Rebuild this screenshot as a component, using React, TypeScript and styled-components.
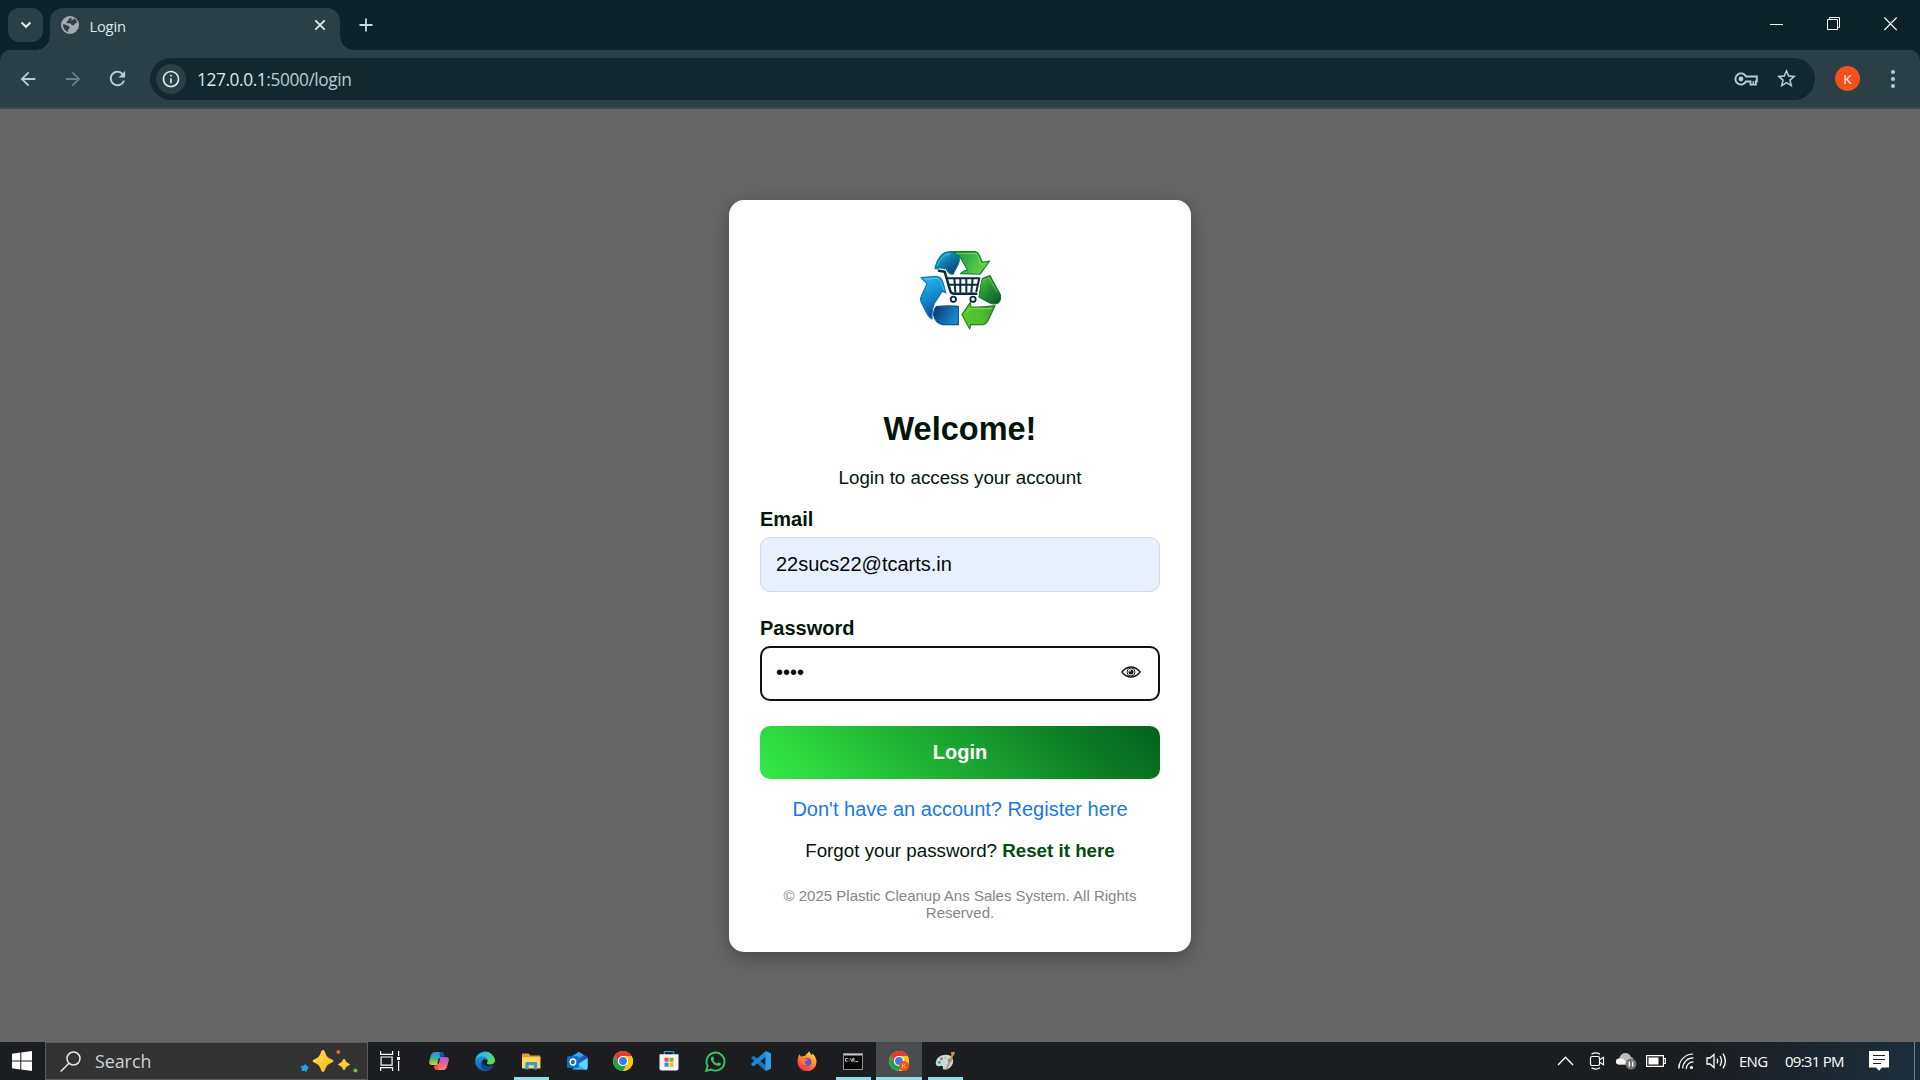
import React from "react";
import styled, { createGlobalStyle, css } from "styled-components";
import { MdArrowBack, MdArrowForward, MdRefresh, MdInfoOutline, MdStarBorder } from "react-icons/md";

const Global = createGlobalStyle`
  * { box-sizing: border-box; }
  body { margin: 0; overflow: hidden; background: #666; }
  svg { display: block; flex: none; }
`;

const uiFont = `"Open Sans", "Noto Sans", sans-serif`;
const pageFont = `"Liberation Sans", Arial, sans-serif`;

const Screen = styled.div`
  width: 1920px;
  height: 1080px;
  display: flex;
  flex-direction: column;
  background: #666;
`;

/* ---------- browser chrome ---------- */
const TabStrip = styled.header`
  height: 50px;
  flex: none;
  display: flex;
  align-items: flex-start;
  padding: 8px 1px 0 8px;
  background: #0c2329;
  color: #dfe9ec;
`;
const TabSearch = styled.button`
  width: 35px;
  height: 34px;
  border: 0;
  border-radius: 11px;
  background: #2a3f46;
  color: #dfe9ec;
  display: grid;
  place-items: center;
  padding: 0;
  margin-right: 7px;
`;
const Tab = styled.div`
  position: relative;
  width: 290px;
  height: 42px;
  border-radius: 13px 13px 0 0;
  background: #2a3f46;
  display: flex;
  align-items: center;
  padding: 0 13px 8px 11px;
  font: 14.7px/20px ${uiFont};
  &::before, &::after {
    content: "";
    position: absolute;
    bottom: 0;
    width: 14px;
    height: 14px;
  }
  &::before { left: -14px; background: radial-gradient(circle at 0 0, transparent 13.5px, #2a3f46 14px); }
  &::after { right: -14px; background: radial-gradient(circle at 100% 0, transparent 13.5px, #2a3f46 14px); }
`;
const TabTitle = styled.span`
  flex: 1;
  margin-left: 10.5px;
  padding-top: 1px;
  letter-spacing: -0.2px;
`;
const NewTab = styled.div`
  margin: 10px 0 0 19px;
`;
const WindowButtons = styled.div`
  margin-left: auto;
  display: flex;
  color: #fff;
`;
const WindowButton = styled.div`
  width: 57px;
  height: 32px;
  display: grid;
  place-items: center;
`;
const ToolbarBack = styled.div`
  background: #0c2329;
  flex: none;
`;
const Toolbar = styled.nav`
  height: 59px;
  border-radius: 10px 10px 0 0;
  border-bottom: 2px solid #3c4e54;
  background: #2a3f46;
  display: flex;
  align-items: center;
  padding-left: 5px;
  color: #b9cdd3;
`;
const NavButton = styled.div<{ $dim?: boolean }>`
  width: 45px;
  height: 34px;
  display: grid;
  place-items: center;
  color: ${(p) => (p.$dim ? "#6c7f86" : "#b9cdd3")};
`;
const AddressBar = styled.div`
  width: 1665px;
  height: 42px;
  margin-left: 10px;
  border-radius: 21px;
  background: #13282e;
  display: flex;
  align-items: center;
  padding: 0 17px 0 6px;
`;
const SiteInfo = styled.div`
  width: 30px;
  height: 30px;
  border-radius: 50%;
  background: #2a3f46;
  display: grid;
  place-items: center;
  color: #dce8eb;
`;
const Url = styled.span`
  flex: 1;
  margin-left: 11px;
  padding-top: 2px;
  font: 17.3px/24px ${uiFont};
  letter-spacing: -0.4px;
  color: #dde6e9;
`;
const UrlPath = styled.span`
  color: #bccbd0;
`;
const StarButton = styled.div`
  margin-left: 17px;
`;
const Avatar = styled.div`
  width: 25px;
  height: 25px;
  border-radius: 50%;
  margin-left: 20px;
  background: #f4511e;
  color: #fff;
  text-align: center;
  font: 13.5px/26px ${uiFont};
`;
const MenuDots = styled.div`
  margin-left: 30.5px;
  display: grid;
  gap: 3px;
  i { width: 4px; height: 4px; border-radius: 50%; background: #b9cdd3; }
`;

/* ---------- login page ---------- */
const Page = styled.main`
  flex: 1;
  display: flex;
  justify-content: center;
  align-items: flex-start;
  padding-top: 91px;
  font-family: ${pageFont};
  color: #03150a;
`;
const Card = styled.section`
  width: 462px;
  height: 752px;
  padding: 30px 31px;
  border-radius: 15px;
  background: #fff;
  box-shadow: 0 5px 19px rgba(0, 0, 0, 0.3);
  display: flex;
  flex-direction: column;
  align-items: stretch;
  text-align: center;
`;
const LogoWrap = styled.div`
  display: flex;
  justify-content: center;
  margin-bottom: 60px;
`;
const Title = styled.h1`
  margin: 0 0 19px;
  font-size: 32.5px;
  line-height: 38px;
`;
const Subtitle = styled.p`
  margin: 0 0 18px;
  font-size: 18.75px;
  line-height: 22px;
`;
const Label = styled.label`
  text-align: left;
  font-size: 20px;
  font-weight: 700;
  line-height: 24px;
  margin-bottom: 6px;
`;
const Field = styled.div<{ $focused?: boolean }>`
  height: 55px;
  border-radius: 10px;
  display: flex;
  align-items: center;
  justify-content: space-between;
  font-size: 20px;
  line-height: 24px;
  color: #060606;
  ${(p) =>
    p.$focused
      ? css`
          border: 2px solid #101010;
          background: #fff;
          padding: 0 17px 4px 14px;
          margin-bottom: 25px;
        `
      : css`
          border: 1px solid #d5dbe3;
          background: #e8f0fe;
          padding: 0 15px 2px;
          margin-bottom: 24px;
        `}
`;
const LoginButton = styled.button`
  height: 53px;
  border: 0;
  border-radius: 10px;
  padding: 0 0 2px;
  background: linear-gradient(45deg, #34eb45, #035f1c);
  color: #fff;
  font: 700 20px/24px ${pageFont};
  margin-bottom: 18px;
`;
const RegisterLink = styled.a`
  color: #1a78e6;
  font-size: 20px;
  line-height: 24px;
  margin-bottom: 19px;
`;
const Forgot = styled.p`
  margin: 0 0 25px;
  font-size: 18.75px;
  line-height: 22px;
`;
const ResetLink = styled.a`
  color: #064a10;
  font-weight: 700;
`;
const Copyright = styled.footer`
  color: #858585;
  font-size: 15px;
  line-height: 17px;
`;

/* ---------- taskbar ---------- */
const Taskbar = styled.footer`
  height: 38px;
  flex: none;
  display: flex;
  align-items: stretch;
  background: linear-gradient(90deg, #1c1d21 0, #1c1d21 1690px, #1c2e3b 1920px);
  color: #fff;
  font-family: ${uiFont};
`;
const Start = styled.div`
  width: 45px;
  display: grid;
  place-items: center;
  padding-right: 1px;
`;
const SearchBox = styled.div`
  width: 323px;
  background: #333;
  border: 1px solid #5b5c5e;
  display: flex;
  align-items: center;
  padding: 0 8px 0 14px;
  color: #cdd3d6;
`;
const SearchText = styled.span`
  flex: 1;
  font-size: 17.8px;
  line-height: 24px;
  margin-left: 14px;
`;
const TaskIcons = styled.div`
  display: flex;
  padding-right: 6px;
`;
const TaskIcon = styled.div<{ $active?: boolean; $running?: boolean }>`
  position: relative;
  width: 46px;
  display: grid;
  place-items: center;
  background: ${(p) => (p.$active ? "#4a4b4e" : "transparent")};
  ${(p) =>
    (p.$running || p.$active) &&
    css`
      &::after {
        content: "";
        position: absolute;
        bottom: 0;
        left: ${p.$active ? "0" : "5.5px"};
        right: ${p.$active ? "0" : "5.5px"};
        height: 3px;
        background: #8fe0e6;
      }
    `}
`;
const TaskViewButton = styled.div`
  width: 48px;
  display: grid;
  place-items: center;
  padding-right: 5px;
`;
const Tray = styled.div`
  margin-left: auto;
  display: flex;
  align-items: center;
`;
const TrayIcon = styled.div<{ $w: number }>`
  width: ${(p) => p.$w}px;
  display: grid;
  place-items: center;
`;
const TrayText = styled.span<{ $w: number }>`
  width: ${(p) => p.$w}px;
  font-size: 15px;
  line-height: 20px;
  letter-spacing: -0.75px;
  white-space: nowrap;
`;
const Notifications = styled.div`
  margin-right: 24px;
`;
const ShowDesktop = styled.div`
  width: 6px;
  height: 38px;
  border-left: 1px solid #7b8489;
`;

const EcoLogo = () => (
  <svg width="120" height="120" viewBox="0 0 360 360">
    <defs>
      <linearGradient id="blueTop" x1="0" y1="0" x2="0.8" y2="1">
        <stop offset="0" stopColor="#1cc3e6" /><stop offset="0.5" stopColor="#1279ac" /><stop offset="1" stopColor="#0b3d6c" />
      </linearGradient>
      <linearGradient id="blueLeft" x1="0.3" y1="0" x2="0.6" y2="1">
        <stop offset="0" stopColor="#21b8ea" /><stop offset="0.5" stopColor="#1784cc" /><stop offset="1" stopColor="#0b3f7c" />
      </linearGradient>
      <linearGradient id="blueBottom" x1="0" y1="0" x2="1" y2="0.4">
        <stop offset="0" stopColor="#0a3566" /><stop offset="1" stopColor="#1589d4" />
      </linearGradient>
      <linearGradient id="greenTop" x1="0" y1="0" x2="1" y2="0.4">
        <stop offset="0" stopColor="#158a3c" /><stop offset="0.6" stopColor="#3fb945" /><stop offset="1" stopColor="#63d044" />
      </linearGradient>
      <linearGradient id="greenRight" x1="0" y1="0" x2="0.8" y2="1">
        <stop offset="0" stopColor="#54c83a" /><stop offset="0.5" stopColor="#269234" /><stop offset="1" stopColor="#0c5a2a" />
      </linearGradient>
      <linearGradient id="greenBottom" x1="0" y1="0" x2="1" y2="0">
        <stop offset="0" stopColor="#58c92d" /><stop offset="0.6" stopColor="#50bd31" /><stop offset="1" stopColor="#329d34" />
      </linearGradient>
    </defs>
    <g strokeWidth="3.5" strokeLinejoin="round">
      <path d="M105 116C110 92 122 66 151 65C174 66 183 83 175 102L158 135L148 130L138 119Z" fill="url(#blueTop)" stroke="#087596" />
      <path d="M152 65H226Q233 66 237 74L247 97L269 93L240 133L181 131L192 123L203 121L184 88Q174 70 152 65Z" fill="url(#greenTop)" stroke="#137f39" />
      <path d="M63 143L110 139Q122 142 126 151L141 189L126 184L105 217Q95 235 96 267Q88 264 82 253L63 215Q60 207 64 199L81 161Z" fill="url(#blueLeft)" stroke="#0b75a8" />
      <path d="M109 230Q140 226 175 229V284H129Q106 280 101 256Q100 239 109 230Z" fill="url(#blueBottom)" stroke="#0c527f" />
      <path d="M186 254L211 217L213 231Q250 233 285 227L267 266Q259 284 247 284H212L209 297Z" fill="url(#greenBottom)" stroke="#23822b" />
      <path d="M247 146L270 137L300 192Q305 207 296 218Q283 226 268 218L237 201L243 155Z" fill="url(#greenRight)" stroke="#147431" />
    </g>
    <g fill="none" strokeLinecap="round" strokeLinejoin="round" strokeWidth="3">
      <path d="M112 106Q124 74 151 71" stroke="#4fd6ec" opacity=".8" />
      <path d="M170 71H225Q231 72 233 79L243 103L259 99" stroke="#82df5f" opacity=".8" />
      <path d="M74 148L109 144Q118 146 122 156L132 180" stroke="#5ed4f5" opacity=".7" />
      <path d="M199 249L209 236H274" stroke="#9ae74b" opacity=".8" />
      <path d="M251 150L267 143L291 186" stroke="#84dd4c" opacity=".7" />
    </g>
    <path d="M115 122L132 125L147 190H236" fill="none" stroke="#fff" strokeWidth="15" />
    <path d="M139 138H242L232 191H151Z" fill="#fff" stroke="#fff" strokeWidth="8" />
    <g fill="none" stroke="#0d2b3c" strokeLinecap="round" strokeLinejoin="round">
      <path strokeWidth="7.500" d="M117 122L134 125L151 183Q153 191 163 191H229" />
      <path strokeWidth="6" d="M142 145H238L229 184M147 164H233M163 145L166 186M181 145V186M199 145V186M218 145L214 186" />
    </g>
    <g fill="#fff" stroke="#0d2b3c" strokeWidth="5.500"><circle cx="160" cy="208" r="8" /><circle cx="219" cy="208" r="8" /></g>
  </svg>
);

const Eye = () => (
  <svg width="20" height="14" viewBox="0 0 20 14" fill="none" stroke="#111">
    <path d="M.8 7Q5 2 10 2T19.200 7Q15 12 10 12T.8 7Z" strokeWidth="1.300" />
    <circle cx="10" cy="7" r="4" strokeWidth=".9" />
    <circle cx="10" cy="7" r="2.500" fill="#111" stroke="none" />
    <circle cx="9" cy="5.900" r=".8" fill="#fff" stroke="none" />
  </svg>
);

const KeyIcon = () => (
  <svg width="24" height="14" viewBox="0 0 24 14" fill="none" stroke="#b9cdd3" strokeWidth="1.900">
    <path d="M12 4.500A5.600 5.600 0 1 0 12 9.500H16.500V12.600H21.800V9.500H22.800V4.500Z" />
    <circle cx="7" cy="7" r="2.400" fill="#b9cdd3" stroke="none" />
    <path d="M19.200 9V12" strokeWidth="1.300" />
  </svg>
);

const ChromeLogo = ({ badge = false }: { badge?: boolean }) => (
  <svg width="20" height="20" viewBox="0 0 20 20">
    <circle cx="10" cy="10" r="10" fill="#fff" />
    <path d="M1.340 5A10 10 0 0 1 18.660 5H10A5 5 0 0 0 5.670 12.500Z" fill="#e33b2e" />
    <path d="M18.660 5A10 10 0 0 1 10 20L14.330 12.500A5 5 0 0 0 10 5Z" fill="#fdc60a" />
    <path d="M10 20A10 10 0 0 1 1.340 5L5.670 12.500A5 5 0 0 0 14.330 12.500Z" fill="#24a148" />
    <circle cx="10" cy="10" r="5" fill="#fff" />
    <circle cx="10" cy="10" r="3.900" fill="#3a7cec" />
    {badge && (
      <>
        <circle cx="15" cy="15" r="5" fill="#f4511e" />
        <path d="M13.600 12.800V17.200M16.600 12.800L13.700 15.400M14.700 14.800L16.700 17.200" stroke="#ffd9cc" strokeWidth=".7" fill="none" />
      </>
    )}
  </svg>
);

const TaskView = () => (
  <svg width="20" height="20" viewBox="0 0 20 20" fill="none" stroke="#fff" strokeWidth="1.200">
    <path d="M.6 0V3.400H12.600V0M.6 20V16.600H12.600V20M1.100 6H12.100V14.200H1.100ZM18.600 0V5M18.600 10V20" />
    <path d="M17 6H20V9H17Z" fill="#fff" stroke="none" />
  </svg>
);

const Copilot = () => (
  <svg width="20" height="20" viewBox="0 0 20 20">
    <defs>
      <linearGradient id="cpA" x1="0" y1="0" x2="0" y2="1">
        <stop offset="0" stopColor="#2a8bea" /><stop offset=".5" stopColor="#37b88c" /><stop offset="1" stopColor="#f2c522" />
      </linearGradient>
      <linearGradient id="cpB" x1="0" y1="0" x2="0" y2="1">
        <stop offset="0" stopColor="#a85be8" /><stop offset=".5" stopColor="#ea5c9c" /><stop offset="1" stopColor="#f88850" />
      </linearGradient>
    </defs>
    <path d="M5.500 1H12.200Q13.800 1 14.300 2.800L15 5.200H13Q11.600 5.200 11 7L8.800 14H3Q-.4 14 .3 10.500Q1.500 5 2.500 3Q3.500 1 5.500 1Z" fill="url(#cpA)" />
    <path d="M14.500 19H7.800Q6.200 19 5.700 17.200L5 14.800H7Q8.400 14.800 9 13L11.200 6H17Q20.400 6 19.700 9.500Q18.500 15 17.500 17Q16.500 19 14.500 19Z" fill="url(#cpB)" />
    <path d="M10.500 1H12.200Q13.800 1 14.300 2.800L15 5.200H13Q11.600 5.200 11 7Z" fill="#1853bd" />
    <path d="M9.500 19H7.800Q6.200 19 5.700 17.200L5 14.800H7Q8.400 14.800 9 13Z" fill="#ee5b38" />
    <path d="M9.600 7.200H11L9.800 12.800H8.400Z" fill="#1c1d21" />
  </svg>
);

const Edge = () => (
  <svg width="20" height="20" viewBox="0 0 20 20">
    <defs>
      <linearGradient id="edA" x1="0" y1="0" x2="1" y2=".4">
        <stop offset="0" stopColor="#2aa6df" /><stop offset=".5" stopColor="#35c1cf" /><stop offset="1" stopColor="#62d957" />
      </linearGradient>
      <linearGradient id="edB" x1="0" y1="0" x2="0" y2="1">
        <stop offset="0" stopColor="#1b92d8" /><stop offset="1" stopColor="#1065b9" />
      </linearGradient>
    </defs>
    <path d="M.2 9.300A10 10 0 0 1 20 9Q20.100 13.400 15.500 13.400Q11.500 13.200 11.800 11.700Q13.400 9.800 12 7.900Q9.600 5 5.500 6Q2 6.800.2 9.300Z" fill="url(#edA)" />
    <path d="M.1 9.800Q2.300 5.500 7 5.600Q11.700 6 12.400 9.400Q9.800 7 7.500 9.300Q5.700 13 8.600 16Q11.800 18.800 16.800 17.300A10 10 0 0 1 .1 9.800Z" fill="url(#edB)" />
    <path d="M7.600 9.200Q6.600 12.500 10 14.600Q13.700 16.400 18.700 14Q17.300 18.300 12.800 19.500Q8.400 19.900 6.200 16Q4.900 11.900 7.600 9.200Z" fill="#124a8d" />
  </svg>
);

const Explorer = () => (
  <svg width="19" height="17" viewBox="0 0 19 17">
    <path d="M0 1.200Q0 .5.8.5H6.500L8.500 2.500H17.600Q18.400 2.500 18.400 3.300V6H0Z" fill="#dfa129" />
    <path d="M0 4.300H18.400V15.500H0Z" fill="#fcd867" />
    <path d="M3.400 16.500V10.200Q3.400 9 4.600 9H14Q15.200 9 15.200 10.200V16.500H12V12.200H6.600V16.500Z" fill="#4198d1" />
  </svg>
);

const Outlook = () => (
  <svg width="21" height="20" viewBox="0 0 21 20">
    <path d="M3 6L12 .8L20.500 6V16L12 13Z" fill="#1261b5" />
    <path d="M5.500 5L12 1L17 4L9 9Z" fill="#35a6ee" />
    <path d="M5 18.500L20.500 6.800V17Q20.500 18.700 18.700 18.700Z" fill="#31b7ef" />
    <path d="M20.500 7.300L11 13L18.400 18.700Q20.500 18.700 20.500 16.700Z" fill="#64d2f7" />
    <rect x="0" y="5.300" width="11.800" height="11.600" rx="1.300" fill="#0f6cc8" />
    <ellipse cx="5.900" cy="11.100" rx="2.700" ry="3" fill="none" stroke="#fff" strokeWidth="1.500" />
  </svg>
);

const Store = () => (
  <svg width="20" height="20" viewBox="0 0 20 20">
    <path d="M5.300 4V1.300Q5.300.6 6 .6H14Q14.700.6 14.700 1.300V4" fill="none" stroke="#2ba3db" strokeWidth="1.300" />
    <path d="M.5 3.300H19.500V17.500Q19.500 19.500 17.500 19.500H2.500Q.5 19.500.5 17.500Z" fill="#f3f3f3" />
    <path d="M5.500 6.700H9.500V10.700H5.500Z" fill="#ef5028" /><path d="M10.500 6.700H14.500V10.700H10.500Z" fill="#76b82a" />
    <path d="M5.500 11.700H9.500V15.700H5.500Z" fill="#1696d8" /><path d="M10.500 11.700H14.500V15.700H10.500Z" fill="#f9b817" />
  </svg>
);

const WhatsApp = () => (
  <svg width="21" height="21" viewBox="0 0 21 21">
    <path d="M1.200 19.800L2.600 14.900A9 9 0 1 1 6.200 18.500Z" fill="none" stroke="#37c660" strokeWidth="1.900" />
    <path d="M6.900 5.600Q7.900 5 8.400 6L9.100 7.800Q9.200 8.300 8.300 9.300Q9.400 11.700 12 12.600L13 11.500Q13.300 11.100 13.800 11.400L15.500 12.300Q16.100 12.600 15.600 13.700Q14.500 15.400 12.300 14.800Q7.700 13.200 6 9.200Q5.400 6.800 6.900 5.600Z" fill="#37c660" />
  </svg>
);

const VSCode = () => (
  <svg width="20" height="20" viewBox="0 0 20 20">
    <path d="M14.600 20L.5 7.400Q-.1 6.800.5 6.200L1.900 5Q2.400 4.700 2.900 5L15 14.400Z" fill="#1279c0" />
    <path d="M14.600 0L.5 12.600Q-.1 13.200.5 13.800L1.900 15Q2.400 15.300 2.900 15L15 5.600Z" fill="#1d8cd8" />
    <path d="M14.600 0L20 2.300V17.700L14.600 20L14.400 18V2Z" fill="#2ba0ec" />
  </svg>
);

const Firefox = () => (
  <svg width="20" height="20" viewBox="0 0 20 20">
    <defs>
      <linearGradient id="ffA" x1=".8" y1="0" x2=".2" y2="1">
        <stop offset="0" stopColor="#ffe044" /><stop offset=".45" stopColor="#ff8a22" /><stop offset="1" stopColor="#f5245e" />
      </linearGradient>
    </defs>
    <path d="M2.300 3.200L4.100 5.600Q6 4.600 8 5Q8.800 3 11 1.700Q12 .5 12.400.2Q12.700 2.600 15 4.300L15.400 2.500Q19.500 6 19.500 11A9.500 9.300 0 0 1 .5 11Q.3 6.500 2.300 3.200Z" fill="url(#ffA)" />
    <circle cx="10.300" cy="11" r="4.200" fill="#7948d7" />
    <path d="M3 7.500Q6 5.500 8.400 7.700L10.800 8.200Q10.400 9.700 8.200 10Q7 13.300 10.400 14Q7 15.300 4.800 12Z" fill="#ff7a28" />
  </svg>
);

const Terminal = () => (
  <svg width="20" height="17" viewBox="0 0 20 17">
    <rect x=".5" y=".5" width="19" height="16" fill="#050505" stroke="#8e8e8e" />
    <path d="M1 1H19V2.500H1Z" fill="#c9c9c9" />
    <path d="M4.600 5.500H2.600V8.200H4.600M6 5.500V6.200M6 7.600V8.300M7.300 5.200L8.900 8.600M9.700 8.600V5.400H11V8.600M12.300 8.600H15" fill="none" stroke="#ddd" strokeWidth=".9" />
  </svg>
);

const Paint = () => (
  <svg width="21" height="20" viewBox="0 0 21 20">
    <path d="M.7 12Q1 6.500 6.500 4.500Q12 2.600 15.700 5Q19 8 17.800 12.500Q15.500 18.500 9.500 18.600Q7.300 18.300 8 16.200Q7.700 14 4.500 15.200Q1 15.800.7 12Z" fill="#bfdbea" />
    <circle cx="4.300" cy="11.300" r="1.500" fill="#47a844" /><circle cx="6.500" cy="7.800" r="1.400" fill="#df4d3a" />
    <circle cx="10.500" cy="6.700" r="1.300" fill="#eebc3b" /><circle cx="14.800" cy="9.500" r="1.900" fill="#3884cc" />
    <path d="M16.600 3.500L18.300 4.500L12.300 18.700L10.700 18.200Z" fill="#d88e3d" />
    <path d="M15.600 1.300L20 .7L19 4.500L17 4.800Z" fill="#c99068" />
  </svg>
);

const Sparkles = () => (
  <svg width="60" height="26" viewBox="0 0 60 26">
    <defs>
      <linearGradient id="spark" x1="0" y1="0" x2="1" y2="1">
        <stop offset="0" stopColor="#ffe254" /><stop offset="1" stopColor="#f6b414" />
      </linearGradient>
    </defs>
    <path d="M24 2Q25.500 2 26 4Q27.500 9.500 32 11Q34.500 11.800 34.500 13Q34.500 14.100 32 14.900Q27.500 16.500 26 21.700Q25.500 24 24 24Q22.500 24 22 21.700Q20.500 16.500 16 14.900Q13.500 14.100 13.500 13Q13.500 11.800 16 11Q20.500 9.500 22 4Q22.500 2 24 2Z" fill="url(#spark)" />
    <path d="M45 11Q46.600 15 50.500 16.500Q46.600 18 45 22Q43.400 18 39.500 16.500Q43.400 15 45 11Z" fill="#fbce35" stroke="#fbce35" />
    <path d="M6.500 16.500Q7 18.800 9.500 19.700Q7.500 20.500 7.200 23.500Q5.500 21.800 3 22.500Q3.800 20.500 2.300 18.500Q5 18.600 6.500 16.500Z" fill="#25a1e4" stroke="#25a1e4" strokeLinejoin="round" />
    <circle cx="39.300" cy="4" r="2" fill="#e36a32" /><circle cx="56.500" cy="22.500" r="2" fill="#7cb748" />
  </svg>
);

export default function App() {
  return (
    <Screen>
      <Global />
      <TabStrip>
        <TabSearch>
          <svg width="12" height="8" viewBox="0 0 12 8"><path d="M1.500 1.500L6 5.800L10.500 1.500" fill="none" stroke="currentColor" strokeWidth="2.100" /></svg>
        </TabSearch>
        <Tab>
          <svg width="18" height="18" viewBox="0 0 18 18">
            <circle cx="9" cy="9" r="9" fill="#a6a9b0" />
            <path d="M10.500 1.800Q7 2.400 7.500 4.600Q5.500 5 5.700 7.200H8.600Q11 7.400 10.500 9.300H13Q13.300 6.800 16.200 6.800Q15.500 3.500 12.800 2.300Q13 4.300 10.500 4.500ZM2 8Q5.500 8.500 8.200 10.500Q9.600 12 7.500 13.300Q6.800 14.500 7.300 16Q2 14.800 2 8Z" fill="#2a3f46" />
          </svg>
          <TabTitle>Login</TabTitle>
          <svg width="14" height="14" viewBox="0 0 14 14"><path d="M2.300 2.300L11.700 11.700M11.700 2.300L2.300 11.700" stroke="currentColor" strokeWidth="1.800" /></svg>
        </Tab>
        <NewTab>
          <svg width="14" height="14" viewBox="0 0 14 14"><path d="M7 .5V13.500M.5 7H13.500" stroke="#c8dbe0" strokeWidth="1.800" /></svg>
        </NewTab>
        <WindowButtons>
          <WindowButton><svg width="13" height="3" viewBox="0 0 13 3"><path d="M0 1.500H13" stroke="#fff" /></svg></WindowButton>
          <WindowButton>
            <svg width="13" height="14" viewBox="0 0 13 14" fill="none" stroke="#fff"><path d="M.5 2.500H10.500V12.500H.5ZM2.500 2.500V.5H12.500V10.500H10.500" /></svg>
          </WindowButton>
          <WindowButton><svg width="13" height="14" viewBox="0 0 13 14"><path d="M.3.5L12.700 13M12.700.5L.3 13" stroke="#fff" strokeWidth="1.200" /></svg></WindowButton>
        </WindowButtons>
      </TabStrip>
      <ToolbarBack>
        <Toolbar>
          <NavButton><MdArrowBack size={22} /></NavButton>
          <NavButton $dim><MdArrowForward size={22} /></NavButton>
          <NavButton><MdRefresh size={23} /></NavButton>
          <AddressBar>
            <SiteInfo><MdInfoOutline size={20} /></SiteInfo>
            <Url>127.0.0.1<UrlPath>:5000/login</UrlPath></Url>
            <KeyIcon />
            <StarButton><MdStarBorder size={23} /></StarButton>
          </AddressBar>
          <Avatar>K</Avatar>
          <MenuDots><i /><i /><i /></MenuDots>
        </Toolbar>
      </ToolbarBack>

      <Page>
        <Card>
          <LogoWrap><EcoLogo /></LogoWrap>
          <Title>Welcome!</Title>
          <Subtitle>Login to access your account</Subtitle>
          <Label>Email</Label>
          <Field>22sucs22@tcarts.in</Field>
          <Label>Password</Label>
          <Field $focused><span>••••</span><Eye /></Field>
          <LoginButton>Login</LoginButton>
          <RegisterLink>Don't have an account? Register here</RegisterLink>
          <Forgot>Forgot your password? <ResetLink>Reset it here</ResetLink></Forgot>
          <Copyright>© 2025 Plastic Cleanup Ans Sales System. All Rights Reserved.</Copyright>
        </Card>
      </Page>

      <Taskbar>
        <Start>
          <svg width="20" height="20" viewBox="0 0 20 20"><path d="M0 2.800L8.300 1.600V9.500H0ZM9.300 1.500L20 0V9.500H9.300ZM0 10.500H8.300V18.400L0 17.200ZM9.300 10.500H20V20L9.300 18.500Z" fill="#fff" /></svg>
        </Start>
        <SearchBox>
          <svg width="21" height="21" viewBox="0 0 21 21" fill="none" stroke="#e8e8e8" strokeWidth="1.500"><circle cx="13.500" cy="7.500" r="6.500" /><path d="M9 12.300L.7 20.500" /></svg>
          <SearchText>Search</SearchText>
          <Sparkles />
        </SearchBox>
        <TaskViewButton><TaskView /></TaskViewButton>
        <TaskIcons>
          <TaskIcon><Copilot /></TaskIcon>
          <TaskIcon><Edge /></TaskIcon>
          <TaskIcon $running><Explorer /></TaskIcon>
          <TaskIcon><Outlook /></TaskIcon>
          <TaskIcon><ChromeLogo /></TaskIcon>
          <TaskIcon><Store /></TaskIcon>
          <TaskIcon><WhatsApp /></TaskIcon>
          <TaskIcon><VSCode /></TaskIcon>
          <TaskIcon><Firefox /></TaskIcon>
          <TaskIcon $running><Terminal /></TaskIcon>
          <TaskIcon $active><ChromeLogo badge /></TaskIcon>
          <TaskIcon $running><Paint /></TaskIcon>
        </TaskIcons>
        <Tray>
          <TrayIcon $w={31}><svg width="17" height="10" viewBox="0 0 17 10"><path d="M1 9L8.500 1.300L16 9" fill="none" stroke="#fff" strokeWidth="1.400" /></svg></TrayIcon>
          <TrayIcon $w={31}>
            <svg width="16" height="18" viewBox="0 0 16 18" fill="none" stroke="#fff" strokeWidth="1.200"><rect x="1.500" y="4.500" width="9" height="9" rx="1.500" /><path d="M10.500 7.700L14.500 5.300V12.700L10.500 10.300M2.500 2.200Q6.500-.3 11 2.200M2.500 15.800Q6.500 18.300 11 15.800" /></svg>
          </TrayIcon>
          <TrayIcon $w={29}>
            <svg width="21" height="18" viewBox="0 0 21 18"><path d="M3 12.500Q0 12.500 0 9.500T3.300 6.500Q4.500 1 9.500 1Q13.500 1 15 5Q17.500 5.500 17.500 8V12.500Z" fill="#b9b9b9" /><path d="M3 12.500Q0 12.500 0 9.500T3.300 6.500Q7 5.500 9.500 9L15 12.500Z" fill="#f2f2f2" /><circle cx="15" cy="12" r="5.500" fill="#747474" /><path d="M13.300 9.500V14.500M16.700 9.500V14.500" stroke="#fff" strokeWidth="1.300" /></svg>
          </TrayIcon>
          <TrayIcon $w={30}>
            <svg width="20" height="12" viewBox="0 0 20 12"><path d="M.6.6H17.400V11.400H.6ZM17.400 3.500H19.300V8.500H17.400" fill="none" stroke="#fff" strokeWidth="1.200" /><path d="M2.500 2.500H12.500V9.500H2.500Z" fill="#fff" /></svg>
          </TrayIcon>
          <TrayIcon $w={30}>
            <svg width="17" height="17" viewBox="0 0 17 17" fill="none" stroke="#fff" strokeWidth="1.200"><path d="M1 15A14 14 0 0 1 15 1M4.700 15.500A10.500 10.500 0 0 1 15.500 4.800M8.200 16A7 7 0 0 1 15.500 8.800" /><path d="M.6 11.500L1 16" opacity=".6" /><circle cx="13.500" cy="14.500" r="1.600" fill="#fff" stroke="none" /></svg>
          </TrayIcon>
          <TrayIcon $w={38}>
            <svg width="28" height="18" viewBox="0 0 28 18" fill="none" stroke="#fff" strokeWidth="1.300"><path d="M1 6H4L8 2.500V15.500L4 12H1ZM11 6.700Q12.500 9 11 11.300M14 4.200Q17 9 14 13.800M17 1.700Q21.800 9 17 16.300" /></svg>
          </TrayIcon>
          <TrayText $w={46}>ENG</TrayText>
          <TrayText $w={83}>09:31 PM</TrayText>
          <Notifications>
            <svg width="22" height="20" viewBox="0 0 22 20"><path d="M1 0H21V16.500H14L11 19.800L8 16.500H1Z" fill="#fff" /><path d="M5 4.500H17M5 8.500H17M5 12.500H13" stroke="#1c2530" strokeWidth="1.200" /></svg>
          </Notifications>
          <ShowDesktop />
        </Tray>
      </Taskbar>
    </Screen>
  );
}
